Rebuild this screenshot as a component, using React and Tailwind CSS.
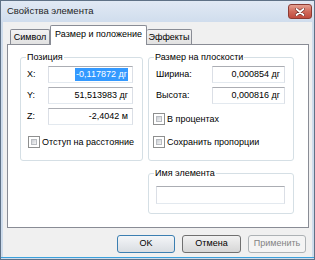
export default function App() {
  const Input = ({ w, children }) => (
    <div
      className={`${w} h-[17px] border border-[#abadb3] border-l-[#dbdfe6] border-r-[#dbdfe6] border-b-[#e3e9ef] bg-white flex items-center justify-end pr-[4px] leading-none whitespace-nowrap`}
    >
      {children}
    </div>
  );
  const Check = ({ label }) => (
    <div className="flex items-center h-[12px] whitespace-nowrap">
      <div className="w-[12px] h-[12px] border border-[#8e8f8f] bg-white p-[2px] mr-[2px]">
        <div className="w-full h-full bg-gradient-to-br from-[#cbcfd5] to-[#f4f4f4] border border-[#b9bcc1]" />
      </div>
      <span className="leading-none">{label}</span>
    </div>
  );
  return (
    <div className="w-[315px] h-[260px] bg-[#cedcec] border border-[#5f7186] flex flex-col font-['Liberation_Sans',sans-serif] text-[9px] text-black overflow-hidden whitespace-nowrap">
      <div className="h-[21px] shrink-0 flex items-center justify-between pl-[6px] pr-[2px] bg-gradient-to-b from-[#e1e9f4] to-[#d0dded]">
        <span className="text-[9.5px] text-[#1e1e1e]">Свойства элемента</span>
        <div className="w-[24px] h-[15px] rounded-[3px] border border-[#8c3b33] bg-gradient-to-b from-[#e4a192] via-[#d06a5b] to-[#c04a3d] flex items-center justify-center">
          <svg width="10" height="8" viewBox="0 0 10 8">
            <path d="M1.5 1 L8.5 7 M8.5 1 L1.5 7" stroke="#6b2a24" strokeWidth="3" strokeLinecap="round" />
            <path d="M1.5 1 L8.5 7 M8.5 1 L1.5 7" stroke="#ffffff" strokeWidth="1.8" strokeLinecap="round" />
          </svg>
        </div>
      </div>
      <div className="h-[235px] shrink-0 ml-[2px] mr-[2px] bg-[#f0f0f0] flex flex-col">
        <div className="h-[22px] flex items-end pl-[7px]">
          <div className="w-[40px] h-[15px] border border-b-0 border-[#898c95] rounded-t-[2px] bg-gradient-to-b from-[#f4f4f4] to-[#e1e1e1] flex items-center justify-center leading-none">
            Символ
          </div>
          <div className="relative z-10 -mb-px w-[97px] h-[20px] border border-b-0 border-[#898c95] rounded-t-[2px] bg-white flex items-start justify-center pt-[4px] leading-none">
            Размер и положение
          </div>
          <div className="w-[45px] h-[15px] border border-b-0 border-l-0 border-[#898c95] rounded-t-[2px] bg-gradient-to-b from-[#f4f4f4] to-[#e1e1e1] flex items-center justify-center leading-none">
            Эффекты
          </div>
        </div>
        <div className="ml-[4px] w-[302px] h-[184px] border border-[#898c95] bg-white pt-[6px] pl-[12px]">
          <div className="flex gap-[5px] items-start">
            <fieldset className="w-[123px] h-[110px] border border-[#d5dfe5] rounded-[3px]">
              <legend className="ml-[5px] px-[1px] leading-[13px]">Позиция</legend>
              <div className="mt-[2px] pl-[6px] flex flex-col gap-[4px]">
                <div className="flex items-center">
                  <span className="w-[21px]">X:</span>
                  <Input w="w-[85px]">
                    <span className="bg-[#3399ff] text-white px-[1px] py-[2px]">-0,117872 дг</span>
                  </Input>
                </div>
                <div className="flex items-center">
                  <span className="w-[21px]">Y:</span>
                  <Input w="w-[85px]">51,513983 дг</Input>
                </div>
                <div className="flex items-center">
                  <span className="w-[21px]">Z:</span>
                  <Input w="w-[85px]">-2,4042 м</Input>
                </div>
              </div>
              <div className="mt-[11px] pl-[7px]">
                <Check label="Отступ на расстояние" />
              </div>
            </fieldset>
            <div className="flex flex-col">
              <fieldset className="w-[146px] h-[110px] border border-[#d5dfe5] rounded-[3px]">
                <legend className="ml-[5px] px-[1px] leading-[13px]">Размер на плоскости</legend>
                <div className="mt-[2px] pl-[7px] flex flex-col gap-[4px]">
                  <div className="flex items-center">
                    <span className="w-[56px]">Ширина:</span>
                    <Input w="w-[73px]">0,000854 дг</Input>
                  </div>
                  <div className="flex items-center">
                    <span className="w-[56px]">Высота:</span>
                    <Input w="w-[73px]">0,000816 дг</Input>
                  </div>
                </div>
                <div className="pl-[4px]">
                  <div className="mt-[9px]">
                    <Check label="В процентах" />
                  </div>
                  <div className="mt-[11px]">
                    <Check label="Сохранить пропорции" />
                  </div>
                </div>
              </fieldset>
              <fieldset className="mt-[6px] w-[146px] h-[47px] border border-[#d5dfe5] rounded-[3px]">
                <legend className="ml-[5px] px-[1px] leading-[13px]">Имя элемента</legend>
                <div className="mt-[6px] pl-[7px]">
                  <div className="w-[129px] h-[18px] border border-[#abadb3] border-l-[#dbdfe6] border-r-[#dbdfe6] border-b-[#e3e9ef] bg-white" />
                </div>
              </fieldset>
            </div>
          </div>
        </div>
        <div className="mt-[7px] flex justify-end gap-[7px] pr-[6px]">
          <div className="w-[58px] h-[18px] rounded-[3px] border border-[#3c7fb1] bg-gradient-to-b from-[#f4f6f8] to-[#d9dde2] flex items-center justify-center">
            OK
          </div>
          <div className="w-[59px] h-[18px] rounded-[3px] border border-[#707070] bg-gradient-to-b from-[#f2f2f2] to-[#d6d6d6] flex items-center justify-center">
            Отмена
          </div>
          <div className="w-[58px] h-[18px] rounded-[3px] border border-[#adb2b5] bg-[#f4f4f4] text-[#838383] flex items-center justify-center">
            Применить
          </div>
        </div>
      </div>
      <div className="flex-1 border-t border-[#3aa0dc] bg-[#cedcec]" />
    </div>
  );
}
